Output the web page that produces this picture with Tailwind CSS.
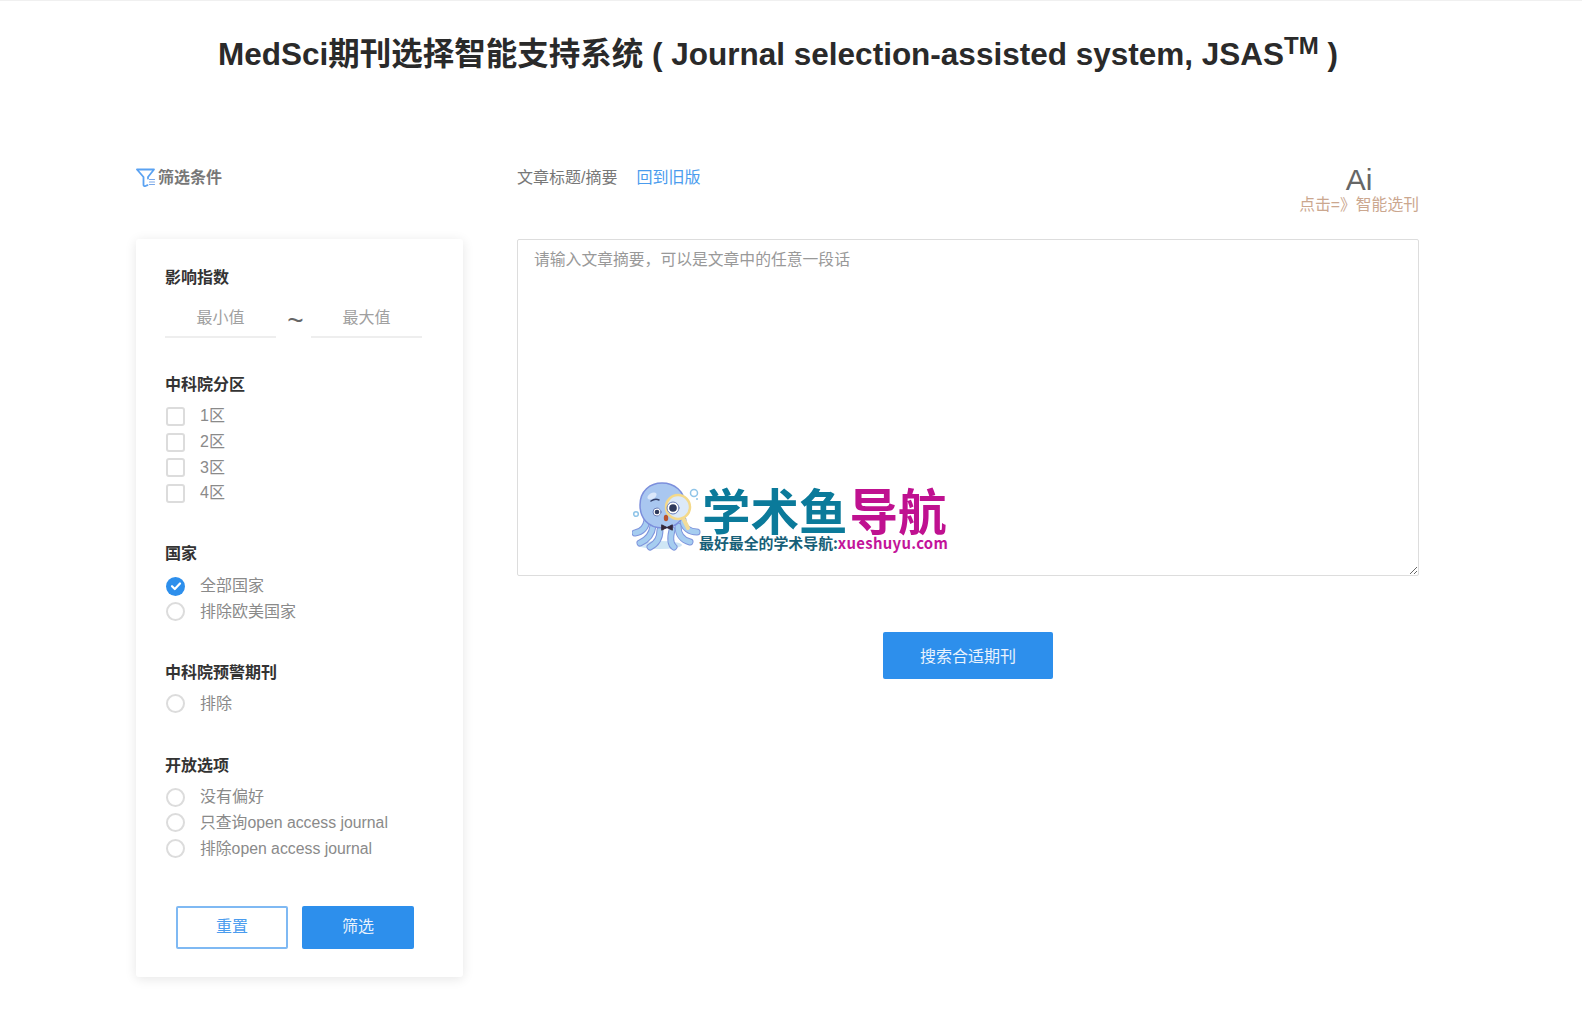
<!DOCTYPE html>
<html lang="zh-CN">
<head>
<meta charset="UTF-8" />
<meta name="viewport" content="width=device-width, initial-scale=1.0" />
<script src="https://cdn.jsdelivr.net/npm/@tailwindcss/browser@4"></script>
<title>MedSci期刊选择智能支持系统</title>
</head>
<body class="bg-white border-t border-[#f0f0f0] font-['Liberation_Sans','Noto_Sans_CJK_SC',sans-serif] text-[16px] text-[#8a8a8a]">
<h1 class="w-[1556px] h-[165px] pt-[29px] text-center text-[31.500px] leading-[48px] font-bold text-[#2a2a2a] whitespace-nowrap">MedSci期刊选择智能支持系统 ( Journal selection-assisted system, JSAS<sup class="text-[24px] align-baseline relative -top-[11px]">TM</sup> )</h1>

<div class="flex pl-[136px] gap-[54px] pb-[40px]">
    <!-- filters -->
    <div class="w-[327px]">
        <div class="h-[73px] flex items-start">
            <div class="flex items-center h-[24px]">
                <svg class="w-[20px] h-[20px]" viewBox="0 0 20 20" fill="none" stroke="#5aa2f2" stroke-width="1.800" stroke-linejoin="round" stroke-linecap="round">
                    <path d="M1 1.500h17l-6 7.500v1.500M1 1.500l6.500 7.500v8c0 1 1 1.500 2 1l2-.8" />
                    <path d="M13.500 11.500h5M13.500 14h5M13.500 16.500h5" stroke-width="1.200" stroke="#7aa8e8" />
                </svg>
                <span class="ml-[2px] font-bold text-[#777]">筛选条件</span>
            </div>
        </div>

        <div class="rounded-[3px] shadow-[0_2px_12px_rgba(0,0,0,0.1)] pt-[27px] pl-[29px] h-[738px]">
            <div class="leading-[24px] font-bold text-[#333]">影响指数</div>
            <div class="flex items-end mt-[8px] h-[40px]">
                <input class="w-[111px] h-[40px] pt-[2px] border-b-2 border-[#eeeeee] text-center outline-none placeholder:text-[#a0a0a0]" placeholder="最小值" />
                <span class="w-[35px] pl-[4px] text-center text-[28px] leading-[34px] text-[#666]">~</span>
                <input class="w-[111px] h-[40px] pt-[2px] border-b-2 border-[#eeeeee] text-center outline-none placeholder:text-[#a0a0a0]" placeholder="最大值" />
            </div>

            <div class="mt-[35px] leading-[24px] font-bold text-[#333]">中科院分区</div>
            <div class="mt-[6.500px] pl-[1px]">
                <label class="flex items-center h-[25.700px] gap-[15px]"><span class="w-[19px] h-[19px] rounded-[3px] border-2 border-[#dcdcdc]"></span>1区</label>
                <label class="flex items-center h-[25.700px] gap-[15px]"><span class="w-[19px] h-[19px] rounded-[3px] border-2 border-[#dcdcdc]"></span>2区</label>
                <label class="flex items-center h-[25.700px] gap-[15px]"><span class="w-[19px] h-[19px] rounded-[3px] border-2 border-[#dcdcdc]"></span>3区</label>
                <label class="flex items-center h-[25.700px] gap-[15px]"><span class="w-[19px] h-[19px] rounded-[3px] border-2 border-[#dcdcdc]"></span>4区</label>
            </div>

            <div class="mt-[36px] leading-[24px] font-bold text-[#333]">国家</div>
            <div class="mt-[7px] pl-[1px]">
                <label class="flex items-center h-[25.700px] gap-[15px]">
                    <span class="w-[19px] h-[19px] rounded-full bg-[#2d8fec] flex items-center justify-center">
                        <svg class="w-[12px] h-[12px]" viewBox="0 0 12 12" fill="none" stroke="#fff" stroke-width="2.200" stroke-linecap="round" stroke-linejoin="round"><path d="M2 6.200l2.800 2.800L10 3.500" /></svg>
                    </span>全部国家</label>
                <label class="flex items-center h-[25.700px] gap-[15px]"><span class="w-[19px] h-[19px] rounded-full border-2 border-[#dcdcdc]"></span>排除欧美国家</label>
            </div>

            <div class="mt-[36.500px] leading-[24px] font-bold text-[#333]">中科院预警期刊</div>
            <div class="mt-[6px] pl-[1px]">
                <label class="flex items-center h-[25.700px] gap-[15px]"><span class="w-[19px] h-[19px] rounded-full border-2 border-[#dcdcdc]"></span>排除</label>
            </div>

            <div class="mt-[37.500px] leading-[24px] font-bold text-[#333]">开放选项</div>
            <div class="mt-[6px] pl-[1px]">
                <label class="flex items-center h-[25.700px] gap-[15px]"><span class="w-[19px] h-[19px] rounded-full border-2 border-[#dcdcdc]"></span>没有偏好</label>
                <label class="flex items-center h-[25.700px] gap-[15px] text-[15.800px]"><span class="w-[19px] h-[19px] rounded-full border-2 border-[#dcdcdc]"></span>只查询open access journal</label>
                <label class="flex items-center h-[25.700px] gap-[15px] text-[15.800px]"><span class="w-[19px] h-[19px] rounded-full border-2 border-[#dcdcdc]"></span>排除open access journal</label>
            </div>

            <div class="flex gap-[14px] mt-[45px] ml-[11px]">
                <button class="w-[112px] h-[42.500px] pb-[2px] rounded-[2px] border-2 border-[#7fb9f3] bg-white text-[#4a9cee]">重置</button>
                <button class="w-[112px] h-[42.500px] pb-[2px] rounded-[2px] bg-[#2d8fec] text-[#e8f2fd]">筛选</button>
            </div>
        </div>
    </div>

    <!-- search -->
    <div class="w-[902px]">
        <div class="h-[73px] flex items-start justify-between">
            <div class="h-[24px] flex items-center">
                <span class="text-[#777]">文章标题/摘要</span>
                <a class="ml-[19px] text-[#4a9cee]" href="#">回到旧版</a>
            </div>
            <div class="flex flex-col items-center -mt-[1px]">
                <span class="text-[30px] leading-[30px] text-[#666]">Ai</span>
                <span class="text-[15.800px] leading-[20px] text-[#cba78f]">点击=》智能选刊</span>
            </div>
        </div>

        <div class="relative">
            <textarea class="block w-full h-[337px] rounded-[2px] border border-[#dddddd] px-[16px] py-[8px] text-[15.800px] leading-[24px] outline-none placeholder:text-[#999]" placeholder="请输入文章摘要，可以是文章中的任意一段话"></textarea>

            <!-- watermark -->
            <div class="absolute left-[115px] top-[243px] w-[330px] h-[70px] pointer-events-none">
                <svg class="absolute left-0 top-0 w-[72px] h-[70px]" viewBox="0 0 72 70" fill="none" stroke-linecap="round">
                    <ellipse cx="28" cy="63" rx="22" ry="4" fill="#cfe6f5" />
                    <g stroke="#7f95dc" stroke-width="7">
                        <path d="M15 38C14 46 9 50 3 51" />
                        <path d="M21 44C20 52 15 58 8 61" />
                        <path d="M28 48C28 56 24 62 18 65" />
                        <path d="M40 48C38 56 38 62 42 65" />
                        <path d="M46 44C46 52 50 58 58 60" />
                        <path d="M51 38C51 46 58 50 65 50" />
                    </g>
                    <g stroke="#a6cdf0" stroke-width="5">
                        <path d="M15 38C14 46 9 50 3 51" />
                        <path d="M21 44C20 52 15 58 8 61" />
                        <path d="M28 48C28 56 24 62 18 65" />
                        <path d="M40 48C38 56 38 62 42 65" />
                        <path d="M46 44C46 52 50 58 58 60" />
                        <path d="M51 38C51 46 58 50 65 50" />
                    </g>
                    <path d="M8 23C8 9 18 1 30 1s23 8 23 22c0 12-6 23-22 23S8 35 8 23z" fill="#a9c7f0" stroke="#7c8fdc" stroke-width="1.500" />
                    <ellipse cx="20" cy="14" rx="5" ry="3" transform="rotate(-30 20 14)" fill="#dbe8fb" />
                    <circle cx="25" cy="30" r="4" fill="#fff" stroke="#6b7fb8" />
                    <circle cx="25" cy="30" r="2.300" fill="#2f3a5c" />
                    <path d="M19 19c3-2 6-2 8-1" stroke="#33406a" stroke-width="1.500" />
                    <ellipse cx="34" cy="36" rx="2.200" ry="3.300" fill="#b8532f" />
                    <path d="M30 43l5 2.500-5 2.500zM40 43l-5 2.500 5 2.500z" fill="#33283a" stroke="#33283a" stroke-linejoin="round" />
                    <path d="M51 36l5 10" stroke="#f2dc9a" stroke-width="4" />
                    <circle cx="46" cy="25" r="12" fill="#dce9f8" stroke="#f4d98a" stroke-width="2.500" />
                    <circle cx="41" cy="26" r="6" fill="#fff" stroke="#6b7fb8" />
                    <circle cx="41" cy="26" r="3.800" fill="#2f3a5c" />
                    <circle cx="62" cy="11" r="3.500" stroke="#8fc4e8" stroke-width="1.500" />
                    <circle cx="65" cy="17" r="1" fill="#8fc4e8" />
                    <circle cx="4" cy="32" r="2.300" stroke="#8fc4e8" stroke-width="1.500" />
                </svg>
                <div class="absolute left-[70px] top-[3px] text-[48.500px] leading-[48px] font-['Noto_Sans_CJK_SC',sans-serif] font-bold whitespace-nowrap text-[#0b7a9a]">学术鱼<span class="ml-[2px] text-[#bf1190]">导航</span></div>
                <div class="absolute left-[67px] top-[52px] text-[14.900px] leading-[18px] font-['Noto_Sans_CJK_SC',sans-serif] font-bold whitespace-nowrap text-[#175f78]">最好最全的学术导航:<span class="text-[#c3149a] tracking-[0.3px]">xueshuyu.com</span></div>
            </div>
        </div>

        <div class="flex justify-center mt-[56px]">
            <button class="w-[170px] h-[47px] pt-[2px] rounded-[2px] bg-[#2d8fec] text-[#e8f2fd]">搜索合适期刊</button>
        </div>
    </div>
</div>
</body>
</html>
